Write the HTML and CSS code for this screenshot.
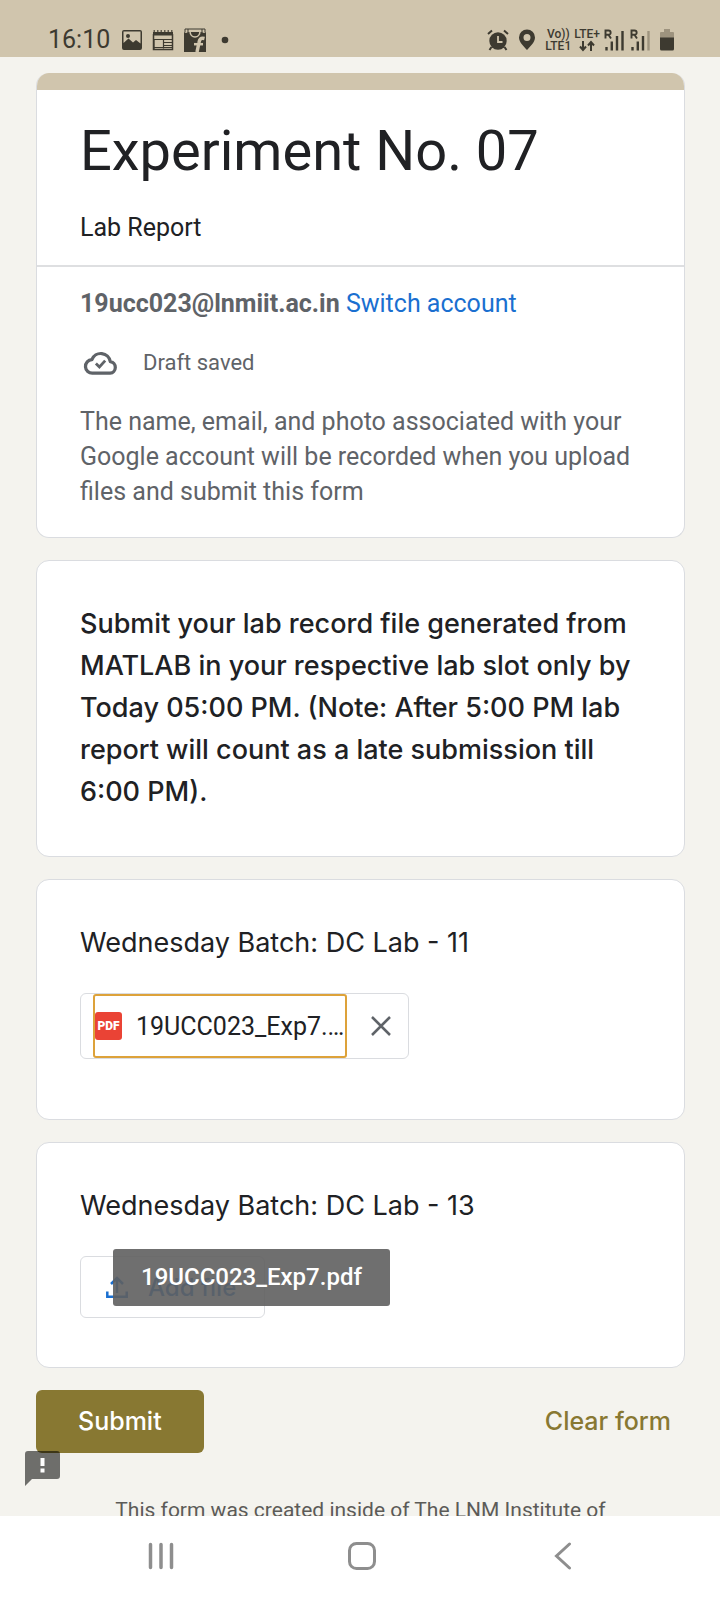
FILE: index.html
```html
<!DOCTYPE html>
<html lang="en">
<head>
<meta charset="utf-8">
<meta name="viewport" content="width=device-width, initial-scale=1">
<title>Experiment No. 07</title>
<link rel="stylesheet" href="styles.css">
</head>
<body>
<header class="status">
  <div class="status-left">
    <span class="clock">16:10</span>
    <svg width="22" height="22" viewBox="0 0 22 22"><path fill="currentColor" fill-rule="evenodd" d="M3 1h16a2 2 0 0 1 2 2v16a2 2 0 0 1-2 2H3a2 2 0 0 1-2-2V3a2 2 0 0 1 2-2zM2.500 2.500v11.500l5-4.500 4.500 4 3-2.500 4.500 3.500V2.500z"/><circle cx="7" cy="7" r="2" fill="currentColor"/></svg>
    <svg width="22" height="22" viewBox="0 0 22 22"><path fill="none" stroke="currentColor" stroke-width="1.500" d="M1.500 5v15.500h19V5"/><path fill="currentColor" d="M1 3h20v3.500H1z"/><path stroke="currentColor" stroke-width="1.500" stroke-dasharray="1.500 2" d="M1.500 2h19.500"/><path fill="none" stroke="currentColor" stroke-width="1.200" d="M2 10.500h19M2 10.500v10M11.500 10.500v9M12 13.500h9M12 16.500h9M2 18.500h19"/></svg>
    <svg width="24" height="24" viewBox="0 0 24 24"><path fill="currentColor" d="M1 4l2 1 3-1h12l3 1 2-1v20H1z"/><path fill="none" stroke="currentColor" stroke-width="1" d="M2 4V1h20v3M5 1v4M19 1v4"/><path fill="none" stroke="#d0c5ad" stroke-width="1.500" d="M7 3c0 8 10 8 10 0"/><path fill="none" stroke="#d0c5ad" stroke-width="3.500" d="M21.500 10.500c-4-1-5 1-5.500 4L14 24"/><path stroke="#d0c5ad" stroke-width="2.500" d="M11 16.200h9"/></svg>
    <svg class="dot" width="8" height="8" viewBox="0 0 8 8"><circle cx="4" cy="4" r="3.300" fill="currentColor"/></svg>
  </div>
  <div class="status-right">
    <svg width="22" height="22" viewBox="0 0 22 22"><circle cx="11" cy="12" r="8.700" fill="currentColor"/><path fill="none" stroke="currentColor" stroke-width="2" d="M1 5l4-3.500M21 5l-4-3.500M4.500 18L2.500 21M17.500 18l2 3"/><path fill="none" stroke="#d0c5ad" stroke-width="1.800" d="M11 7v6h4.500"/></svg>
    <svg width="18" height="22" viewBox="0 0 18 22"><path fill="currentColor" fill-rule="evenodd" d="M9 0.500a8 8 0 0 1 8 8c0 5-5 9-8 12.500C6 17.500 1 13.500 1 8.500a8 8 0 0 1 8-8zM9 5a3.500 3.500 0 1 0 0 7 3.500 3.500 0 0 0 0-7z"/></svg>
    <div class="lte">
      <div class="net"><span>Vo))</span><span>LTE1</span></div>
      <div class="net"><span>LTE+</span><svg width="16" height="12" viewBox="0 0 16 12"><path fill="none" stroke="currentColor" stroke-width="2" d="M4 1v9M1 6.500L4 10l3-3.500M12 11V2M9 5.500L12 2l3 3.500"/></svg></div>
    </div>
    <div class="signals">
      <svg width="20" height="22" viewBox="0 0 20 22"><path fill="none" stroke="currentColor" stroke-width="1.900" d="M1.500 9.500V1.500h3a2.100 2.100 0 0 1 0 4.300H2M4.500 5.800L7 9.500"/><path stroke="currentColor" stroke-width="2.400" d="M2.500 18v3.500M7.800 12.500v9M13 7v14.500M18.500 2v19.500"/></svg>
      <svg width="20" height="22" viewBox="0 0 20 22"><path fill="none" stroke="currentColor" stroke-width="1.900" d="M1.500 9.500V1.500h3a2.100 2.100 0 0 1 0 4.300H2M4.500 5.800L7 9.500"/><path stroke="currentColor" stroke-width="2.400" d="M2.500 18v3.500M7.800 12.500v9M13 7v14.500"/><path stroke="#9d937e" stroke-width="2.400" d="M18.500 2v19.500"/></svg>
    </div>
    <svg width="16" height="22" viewBox="0 0 16 22"><path fill="#9d937e" d="M5 0h6v3h3a1 1 0 0 1 1 1v5H1V4a1 1 0 0 1 1-1h3z"/><path fill="currentColor" d="M1 8.500h14V20a1.500 1.500 0 0 1-1.500 1.500h-11A1.500 1.500 0 0 1 1 20z"/></svg>
  </div>
</header>

<main class="page">
  <form class="form">
    <section class="card card-head">
      <div class="intro">
        <h1>Experiment No. 07</h1>
        <p class="desc">Lab Report</p>
      </div>
      <div class="account">
        <p><strong>19ucc023@lnmiit.ac.in</strong> <a href="#">Switch account</a></p>
        <p class="draft">
          <svg width="36" height="26" viewBox="0 0 38 28"><path fill="none" stroke="currentColor" stroke-width="3.500" stroke-linejoin="round" d="M10 25a7.300 7.300 0 0 1-.8-14.600A10.300 10.300 0 0 1 29 12.500a6.300 6.300 0 0 1-.2 12.500z"/><path fill="none" stroke="currentColor" stroke-width="3" d="M13.500 14.500l3.800 3.800 6.200-6.800"/></svg>
          <span>Draft saved</span>
        </p>
        <p>The name, email, and photo associated with your Google account will be recorded when you upload files and submit this form</p>
      </div>
    </section>

    <section class="card note">
      <h2>Submit your lab record file generated from MATLAB in your respective lab slot only by Today 05:00 PM. (Note: After 5:00 PM lab report will count as a late submission till 6:00 PM).</h2>
    </section>

    <section class="card question question-filled">
      <h2>Wednesday Batch: DC Lab - 11</h2>
      <div class="chip">
        <a class="file" href="#" aria-label="19UCC023_Exp7.pdf">
          <span class="pdf">PDF</span>
          <span class="name">19UCC023_Exp7.…</span>
        </a>
        <button class="remove" type="button" aria-label="Remove file"><svg width="20" height="20" viewBox="0 0 20 20"><path stroke="currentColor" stroke-width="2.500" d="M1 1l18 18M19 1L1 19"/></svg></button>
      </div>
    </section>

    <section class="card question">
      <h2>Wednesday Batch: DC Lab - 13</h2>
      <div class="upload">
        <button class="add" type="button">
          <svg width="22" height="24" viewBox="0 0 22 24"><path fill="none" stroke="currentColor" stroke-width="2.500" d="M1.300 16.500v5.200h19.400v-5.200M11 18V3M5 9l6-6 6 6"/></svg>
          <span>Add file</span>
        </button>
        <div class="tooltip" role="tooltip">19UCC023_Exp7.pdf</div>
      </div>
    </section>

    <div class="actions">
      <button class="submit" type="submit">Submit</button>
      <button class="clear" type="reset">Clear form</button>
      <button class="report" type="button" aria-label="Report a problem"><svg width="36" height="36" viewBox="0 0 36 36"><path fill="#000" fill-opacity=".55" fill-rule="evenodd" d="M3 0h29a3 3 0 0 1 3 3v22a3 3 0 0 1-3 3H7l-7 7V3a3 3 0 0 1 3-3z"/><path fill="#fff" d="M15.500 7h4v8h-4zM15.500 17.500h4v4h-4z"/></svg></button>
    </div>
    <p class="created">This form was created inside of The LNM Institute of</p>
  </form>
</main>

<nav class="softkeys">
  <button type="button" aria-label="Recent apps"><svg width="28" height="28" viewBox="0 0 28 28"><path stroke="currentColor" stroke-width="3.500" stroke-linecap="round" d="M3.500 2.500v23M14 2.500v23M24.500 2.500v23"/></svg></button>
  <button type="button" aria-label="Home"><svg width="28" height="28" viewBox="0 0 28 28"><rect x="1.500" y="1.500" width="25" height="25" rx="7" fill="none" stroke="currentColor" stroke-width="3"/></svg></button>
  <button type="button" aria-label="Back"><svg width="28" height="28" viewBox="0 0 28 28"><path fill="none" stroke="currentColor" stroke-width="3" stroke-linecap="round" d="M20.500 2L7.500 14l13 12"/></svg></button>
</nav>
</body>
</html>
```
FILE: styles.css
```css
* {
  box-sizing: border-box;
}

body {
  margin: 0;
  height: 100vh;
  display: flex;
  flex-direction: column;
  background: #f4f3ee;
  color: #202124;
  font-family: Roboto, "Liberation Sans", sans-serif;
  font-size: 25px;
  line-height: 35px;
}

h1,
h2,
p {
  margin: 0;
  font-weight: 400;
}

button {
  border: 0;
  padding: 0;
  background: none;
  color: inherit;
  font: inherit;
}

svg {
  display: block;
  flex: none;
}

a {
  color: #1a6fd0;
  text-decoration: none;
}

.status {
  flex: none;
  display: flex;
  justify-content: space-between;
  padding: 22px 45px 0 48px;
  height: 57px;
  background: #d0c5ad;
  color: #3d3a30;
}

.status-left,
.status-right {
  display: flex;
  align-items: center;
  gap: 9px;
  height: 35px;
}

.clock {
  margin-right: 2px;
}

.lte {
  display: flex;
  gap: 3px;
}

.signals {
  display: flex;
  gap: 6px;
  margin-left: -5px;
}

.dot {
  margin-left: 5px;
}

.net {
  display: flex;
  flex-direction: column;
  align-items: center;
  font-size: 12px;
  line-height: 12px;
  font-weight: 500;
}

.page {
  flex: 1;
  min-height: 0;
  overflow: hidden;
  padding: 16px 35px 0 36px;
}

.form {
  display: flex;
  flex-direction: column;
}

.card {
  margin-bottom: 22px;
  padding: 0 43px;
  border: 1px solid #dadce0;
  border-radius: 13px;
  background: #fff;
}

.card-head {
  padding: 0;
  border-top: 0;
  overflow: hidden;
}

.intro {
  padding: 23px 43px 20px;
  border-top: 17px solid #d0c5ad;
  border-bottom: 2px solid #dedfe1;
}

h1 {
  font-size: 56px;
  line-height: 76px;
}

.desc {
  margin-top: 21px;
}

.account {
  display: flex;
  flex-direction: column;
  gap: 24px;
  padding: 19px 43px 28px;
  color: #5f6368;
}

.draft {
  display: flex;
  align-items: center;
  gap: 24px;
  padding-left: 3px;
  font-size: 22px;
}

.note {
  padding-top: 42px;
  padding-bottom: 43px;
}

h2 {
  font-family: Inter, Roboto, sans-serif;
  font-size: 27px;
  line-height: 42px;
}

.note h2 {
  font-weight: 500;
}

.question {
  padding-top: 42px;
  padding-bottom: 49px;
}

.question-filled {
  padding-bottom: 60px;
}

.question h2 {
  margin-bottom: 29px;
}

.chip {
  display: flex;
  width: fit-content;
  height: 66px;
  padding-left: 12px;
  border: 1px solid #dadce0;
  border-radius: 6px;
}

.file {
  display: flex;
  align-items: center;
  gap: 14px;
  width: 254px;
  border: 2px solid #dda23a;
  border-radius: 3px;
  color: #202124;
}

.pdf {
  flex: none;
  width: 27px;
  border-radius: 3px;
  background: #ea4335;
  color: #fff;
  font-size: 12px;
  font-weight: 900;
  line-height: 28px;
  text-align: center;
}

.name {
  white-space: nowrap;
}

.remove {
  display: flex;
  align-items: center;
  justify-content: center;
  width: 61px;
  padding-left: 6px;
  color: #5f6368;
}

.upload {
  position: relative;
}

.add,
.actions {
  font-family: Inter, Roboto, sans-serif;
  font-weight: 500;
}

.add {
  display: flex;
  align-items: center;
  gap: 20px;
  height: 62px;
  padding: 0 28px 0 25px;
  border: 1px solid #dadce0;
  border-radius: 6px;
  color: #1a6fd0;
  font-size: 24px;
}

.tooltip {
  position: absolute;
  top: -7px;
  left: 33px;
  padding: 0 28px;
  border-radius: 3px;
  background: rgba(95, 95, 95, 0.9);
  color: #fff;
  font-size: 24px;
  font-weight: 500;
  line-height: 57px;
}

.actions {
  position: relative;
  display: flex;
  justify-content: space-between;
}

.submit {
  height: 63px;
  padding: 0 42px;
  border-radius: 6px;
  background: #887832;
  color: #fff;
}

.clear {
  padding: 0 14px;
  color: #887832;
}

.report {
  position: absolute;
  top: 61px;
  left: -11px;
}

.created {
  margin-top: 40px;
  color: #5c5b58;
  font-size: 21px;
  text-align: center;
  white-space: nowrap;
}

.softkeys {
  flex: none;
  display: grid;
  grid-template-columns: repeat(3, 1fr);
  align-items: center;
  height: 84px;
  padding: 0 56px 4px 60px;
  background: #fff;
  color: #8e8e8e;
}

.softkeys button {
  display: flex;
  justify-content: center;
}
```
